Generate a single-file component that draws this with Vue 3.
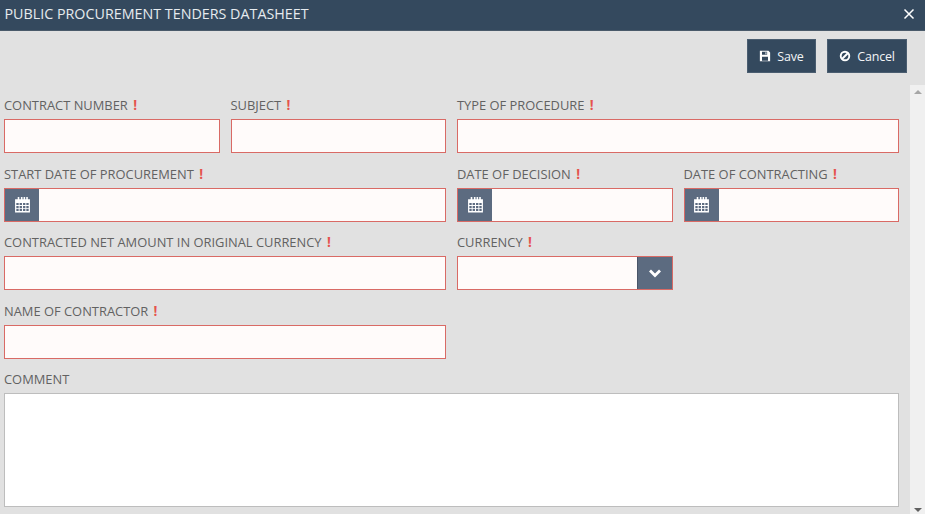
<script setup>
const calendarPath = 'M1 3h2.500V1h1.500v2h1.500V1H8v2h1V1h1.500v2h1V1H13v2h2v12.500H1zM2.200 6.500v1.900h2.200V6.500zM5.300 6.500v1.900h2.200V6.500zM8.500 6.500v1.900h2.200V6.500zM11.600 6.500v1.900h2.200V6.500zM2.200 9.300v1.900h2.200V9.300zM5.300 9.300v1.900h2.200V9.300zM8.500 9.300v1.900h2.200V9.300zM11.600 9.300v1.900h2.200V9.300zM2.200 12.100v1.900h2.200v-1.900zM5.300 12.100v1.900h2.200v-1.900zM8.500 12.100v1.900h2.200v-1.900zM11.600 12.100v1.900h2.200v-1.900z'
</script>

<template>
  <div class="dialog">
    <header class="titlebar">
      <span class="title">PUBLIC PROCUREMENT TENDERS DATASHEET</span>
      <svg class="close" viewBox="0 0 12 12" width="12" height="12"><path d="M1.500 1.500l9 9M10.500 1.500l-9 9" stroke="#fff" stroke-width="1.500" fill="none"/></svg>
    </header>
    <div class="toolbar">
      <button class="btn save">
        <svg viewBox="0 0 14 14" width="12" height="12"><path fill="#fff" fill-rule="evenodd" d="M1 1h10l2 2v10H1zM3.500 2v3.500h6V2zM7.500 2.500h1.200v2.500H7.500zM3.500 8v4.500h7V8z"/></svg>
        Save
      </button>
      <button class="btn cancel">
        <svg viewBox="0 0 14 14" width="12" height="12"><circle cx="7" cy="7" r="5" fill="none" stroke="#fff" stroke-width="2.200"/><path d="M3.500 10.500l7-7" stroke="#fff" stroke-width="2.200"/></svg>
        Cancel
      </button>
    </div>
    <div class="body">
      <form class="form">
        <div class="field">
          <label>CONTRACT NUMBER <b>!</b></label>
          <div class="box req"></div>
        </div>
        <div class="field">
          <label>SUBJECT <b>!</b></label>
          <div class="box req"></div>
        </div>
        <div class="field span2">
          <label>TYPE OF PROCEDURE <b>!</b></label>
          <div class="box req"></div>
        </div>

        <div class="field span2">
          <label>START DATE OF PROCUREMENT <b>!</b></label>
          <div class="box req date">
            <span class="addon"><svg viewBox="0 0 16 16" width="17" height="17"><path fill="#fff" fill-rule="evenodd" :d="calendarPath"/></svg></span>
          </div>
        </div>
        <div class="field">
          <label>DATE OF DECISION <b>!</b></label>
          <div class="box req date">
            <span class="addon"><svg viewBox="0 0 16 16" width="17" height="17"><path fill="#fff" fill-rule="evenodd" :d="calendarPath"/></svg></span>
          </div>
        </div>
        <div class="field">
          <label>DATE OF CONTRACTING <b>!</b></label>
          <div class="box req date">
            <span class="addon"><svg viewBox="0 0 16 16" width="17" height="17"><path fill="#fff" fill-rule="evenodd" :d="calendarPath"/></svg></span>
          </div>
        </div>

        <div class="field span2">
          <label>CONTRACTED NET AMOUNT IN ORIGINAL CURRENCY <b>!</b></label>
          <div class="box req"></div>
        </div>
        <div class="field">
          <label>CURRENCY <b>!</b></label>
          <div class="box req select">
            <span class="caret"><svg viewBox="0 0 14 10" width="14" height="10"><path d="M2 2.500l5 5 5-5" stroke="#fff" stroke-width="2.800" fill="none"/></svg></span>
          </div>
        </div>
        <div class="spacer"></div>

        <div class="field span2">
          <label>NAME OF CONTRACTOR <b>!</b></label>
          <div class="box req"></div>
        </div>
        <div class="spacer span2"></div>

        <div class="field span4">
          <label>COMMENT</label>
          <div class="box area"></div>
        </div>
      </form>
      <div class="scrollbar">
        <span class="arrow up"></span>
        <span class="arrow down"></span>
      </div>
    </div>
  </div>
</template>

<style scoped>
.dialog {
  width: 925px;
  height: 514px;
  background: #e1e1e1;
  font-family: "Open Sans", "Liberation Sans", sans-serif;
  overflow: hidden;
  display: flex;
  flex-direction: column;
}
.titlebar {
  height: 31px;
  flex: none;
  box-sizing: border-box;
  background: #34495e;
  border-bottom: 1px solid #4a5a6a;
  display: flex;
  align-items: center;
  justify-content: space-between;
  padding: 0 10px 4px 4.500px;
  color: #e6ebef;
}
.title {
  font-size: 14.300px;
}
.close {
  margin-top: 1px;
}
.toolbar {
  height: 54px;
  flex: none;
  box-sizing: border-box;
  padding: 8px 18px 0 0;
  display: flex;
  justify-content: flex-end;
  gap: 11px;
}
.btn {
  height: 34px;
  border: 1px solid #4a5d70;
  background: #34495e;
  color: #f2f4f6;
  font: 12.500px "Open Sans", sans-serif;
  letter-spacing: -0.2px;
  display: flex;
  align-items: center;
  justify-content: center;
  gap: 6px;
  padding: 0;
}
.save {
  width: 69px;
}
.cancel {
  width: 80px;
}
.body {
  flex: 1;
  min-height: 0;
  display: flex;
  justify-content: space-between;
}
.form {
  margin: 0;
  width: 899px;
  padding: 11px 0 0 4px;
  box-sizing: border-box;
  display: grid;
  grid-template-columns: repeat(4, 1fr);
  column-gap: 11px;
  align-content: start;
  row-gap: 0;
}
.field {
  min-width: 0;
  height: 68.600px;
}
.spacer {
  height: 68.600px;
}
.span2 {
  grid-column: span 2;
}
.span4 {
  grid-column: span 4;
  height: auto;
}
label {
  display: block;
  height: 23px;
  line-height: 18px;
  font-size: 12.900px;
  color: #626262;
  white-space: nowrap;
}
label b {
  color: #e5534d;
  font-weight: 700;
  font-size: 13.500px;
  margin-left: 2px;
}
.box {
  box-sizing: border-box;
  height: 34px;
  border: 1px solid #c0c0c0;
  background: #fff;
  display: flex;
}
.req {
  border-color: #d96a65;
  background: #fffbfa;
}
.addon {
  width: 34px;
  background: #5c6b80;
  display: flex;
  align-items: center;
  justify-content: center;
  padding-bottom: 1px;
  box-sizing: border-box;
}
.select {
  justify-content: flex-end;
}
.caret {
  width: 34px;
  background: #5c6b80;
  border-left: 1px solid #4a5568;
  display: flex;
  align-items: center;
  justify-content: center;
}
.area {
  height: 114px;
  border-color: #bdbdbd;
}
.scrollbar {
  position: relative;
  width: 15px;
  background: #f0f0f0;
  flex: none;
}
.arrow {
  position: absolute;
  left: 3.500px;
  width: 0;
  height: 0;
  border-left: 4px solid transparent;
  border-right: 4px solid transparent;
}
.up {
  top: 5px;
  border-bottom: 4px solid #a6a6a6;
}
.down {
  bottom: 2px;
  border-top: 4px solid #606060;
}
</style>
